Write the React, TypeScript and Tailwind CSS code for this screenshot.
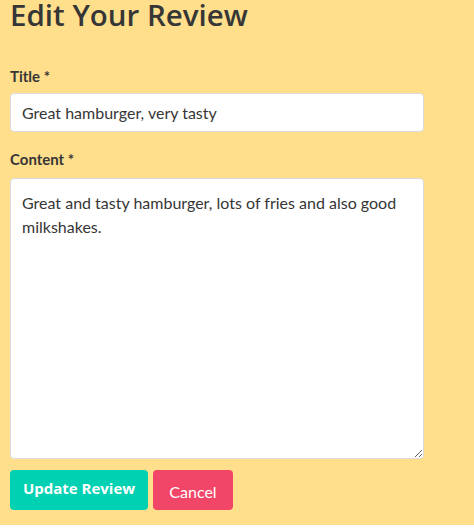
export default function App() {
  return (
    <div className="min-h-screen bg-[#ffdf8c] px-[10px] text-[#363636] font-['Lato',sans-serif]">
      <h1 className="text-[29.5px] leading-[36px] font-semibold font-['Open_Sans',sans-serif] -mt-[3px]">
        Edit Your Review
      </h1>

      <form className="mt-[33px] w-[414px]" onSubmit={(e) => e.preventDefault()}>
        <label className="block text-[15px] font-bold leading-[20px]">
          Title *
        </label>
        <input
          defaultValue="Great hamburger, very tasty"
          className="mt-[7px] block w-full h-[39px] rounded-[4px] border border-[#dbdbdb] bg-white px-[11px] text-[16px] text-[#363636] outline-none"
        />

        <label className="mt-[17px] block text-[15px] font-bold leading-[20px]">
          Content *
        </label>
        <textarea
          defaultValue="Great and tasty hamburger, lots of fries and also good milkshakes."
          className="mt-[9px] block w-full h-[281px] rounded-[4px] border border-[#dbdbdb] bg-white px-[11px] py-[12px] text-[16px] leading-[24px] text-[#363636] outline-none"
        />

        <div className="mt-[11px] flex gap-[5px]">
          <button className="h-[40px] w-[138px] rounded-[4px] bg-[#00d1b2] text-white text-[15px] font-bold font-['Open_Sans',sans-serif] pb-[3px]">
            Update Review
          </button>
          <button className="h-[40px] w-[80px] rounded-[4px] bg-[#f14668] text-white text-[16px] pt-[3px]">
            Cancel
          </button>
        </div>
      </form>
    </div>
  );
}
